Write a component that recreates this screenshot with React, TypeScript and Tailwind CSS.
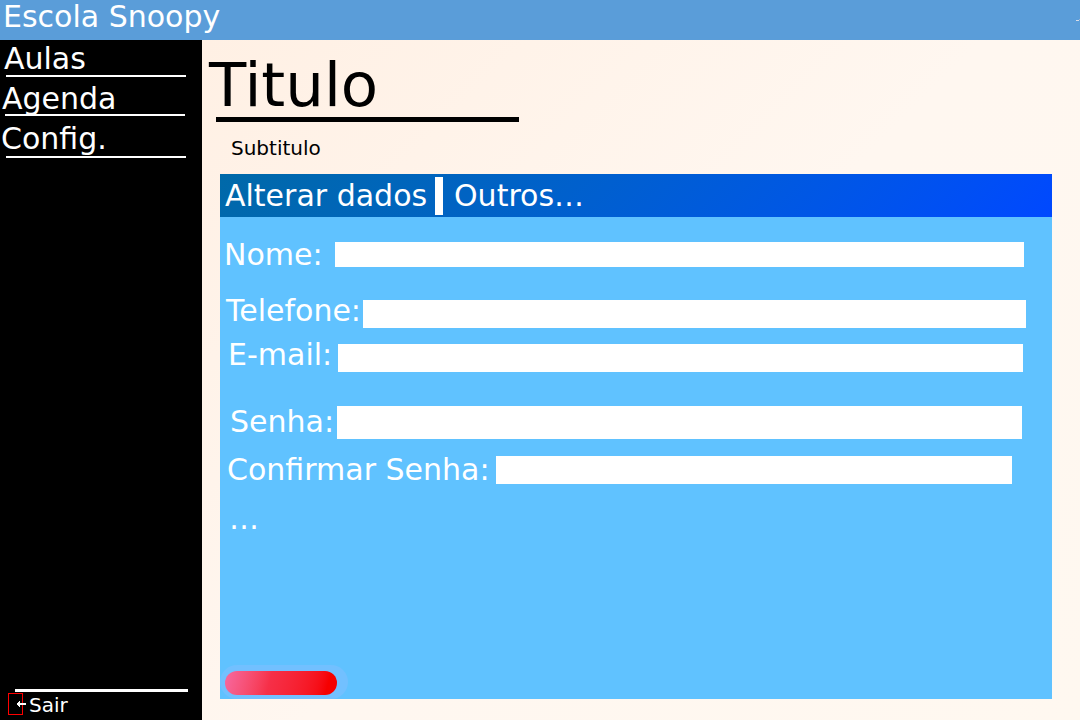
import React from "react";

type NavItem = { label: string; link: string; line: string };

const navItems: NavItem[] = [
  { label: "Aulas", link: "h-[35px] pl-1", line: "ml-1.5 mr-4" },
  { label: "Agenda", link: "mt-[3px] h-[34px] pl-0.5", line: "ml-[5px] mr-[17px]" },
  { label: "Config.", link: "mt-1 h-9 pl-px", line: "ml-1.5 mr-4" },
];

type Field = {
  id: string;
  label: string;
  type: string;
  row: string;
  labelWidth: string;
  inputHeight: string;
};

const fields: Field[] = [
  { id: "nome", label: "Nome:", type: "text", row: "items-center pl-1 pr-7", labelWidth: "w-[111px]", inputHeight: "h-[25px]" },
  { id: "telefone", label: "Telefone:", type: "tel", row: "mt-[21px] items-end pl-1.5 pr-[26px]", labelWidth: "w-[137px]", inputHeight: "h-7" },
  { id: "email", label: "E-mail:", type: "email", row: "mt-[9px] items-end pl-2 pr-[29px]", labelWidth: "w-[110px]", inputHeight: "h-7" },
  { id: "senha", label: "Senha:", type: "password", row: "mt-8 items-end pl-2.5 pr-[30px]", labelWidth: "w-[107px]", inputHeight: "h-[33px]" },
  { id: "confirmar", label: "Confirmar Senha:", type: "password", row: "mt-[13px] items-center pl-[7px] pr-10", labelWidth: "w-[269px]", inputHeight: "h-7" },
];

function ExitIcon() {
  return (
    <svg width="18" height="22" viewBox="0 0 18 22" aria-hidden="true" className="shrink-0">
      <rect x="0.5" y="0.5" width="14" height="21" fill="none" stroke="#ff0000" />
      <path d="M9 10h1V9h1V8h1v2h6v2h-6v2h-1v-1h-1v-1H9z" fill="#fff" />
    </svg>
  );
}

export default function App() {
  return (
    <div className="flex min-h-screen flex-col font-['DejaVu_Sans',sans-serif] text-[30px] leading-[35px] text-white">
      <header className="flex h-10 items-start justify-between bg-[#5a9dd9] pl-[3px]">
        <span className="-mt-px whitespace-nowrap">Escola Snoopy</span>
        <svg width="4" height="40" viewBox="0 0 4 40" aria-hidden="true">
          <path d="M0 20.5h3" stroke="#d9dde8" />
          <path d="M3 19.5h1" stroke="#9fb6d4" />
        </svg>
      </header>

      <div className="flex grow">
        <aside className="flex w-[202px] shrink-0 flex-col justify-between bg-black">
          <nav className="flex flex-col">
            {navItems.map((item) => (
              <React.Fragment key={item.label}>
                <a href="#" className={`block leading-[38px] ${item.link}`}>
                  {item.label}
                </a>
                <div className={`h-0.5 bg-white ${item.line}`} />
              </React.Fragment>
            ))}
          </nav>
          <div className="pb-[5px]">
            <div className="ml-[15px] mr-3.5 h-[3px] bg-white" />
            <a href="#" className="mt-px flex h-[22px] items-center gap-[3px] pl-2 text-xl leading-6">
              <ExitIcon />
              <span className="pt-0.5">Sair</span>
            </a>
          </div>
        </aside>

        <main className="flex min-w-0 grow flex-col bg-linear-135 from-[#fff0e4] via-[#fff7f0] to-[#fff8f0] pb-[21px] pr-7">
          <h1 className="h-[77px] pl-[7px] pt-2 text-[61px] leading-[74px] text-black">Titulo</h1>
          <div className="ml-3.5 h-[5px] w-[303px] bg-black" />
          <p className="mb-3.5 mt-3.5 pl-[29px] text-xl leading-6 text-black">Subtitulo</p>

          <section className="ml-[18px] flex grow flex-col bg-[#60c2ff]">
            <div className="flex h-[43px] items-center bg-linear-135 from-[#0069a8] to-[#0048ff] pl-[5px]">
              <button type="button" className="w-[210px] whitespace-nowrap text-left">Alterar dados</button>
              <div className="h-[38px] w-2 bg-white" />
              <button type="button" className="ml-[11px]">Outros…</button>
            </div>

            <form className="flex grow flex-col pt-5">
              {fields.map((f) => (
                <div key={f.id} className={`flex ${f.row}`}>
                  <label htmlFor={f.id} className={`shrink-0 whitespace-nowrap ${f.labelWidth}`}>
                    {f.label}
                  </label>
                  <input
                    id={f.id}
                    type={f.type}
                    className={`min-w-0 grow bg-white px-2 text-base text-black outline-none ${f.inputHeight}`}
                  />
                </div>
              ))}
              <p className="mt-3.5 pl-[9px]">…</p>
              <div className="mt-auto flex h-[34px] w-32 items-center rounded-full bg-[#72c0ff] pl-[5px] pt-0.5">
                <button
                  type="submit"
                  aria-label="Salvar"
                  className="h-6 w-28 rounded-full bg-linear-105 from-[#f768a0] via-[#f62f48] via-40% to-[#f60000] to-90%"
                />
              </div>
            </form>
          </section>
        </main>
      </div>
    </div>
  );
}
